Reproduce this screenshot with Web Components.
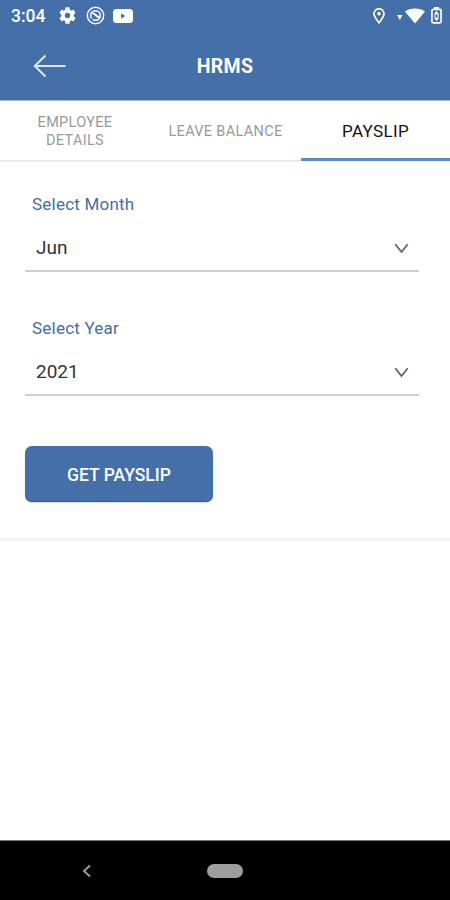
<!DOCTYPE html>
<html lang="en"><head><meta charset="utf-8"><title>HRMS</title>
<style>html,body{margin:0;padding:0;background:#fff}body{font-family:Roboto,"Liberation Sans",sans-serif;width:450px;height:900px;overflow:hidden}</style></head>
<body><hrms-app></hrms-app>
<script>
const define=(name,html)=>customElements.define(name,class extends HTMLElement{
  constructor(){super();this.attachShadow({mode:'open'}).innerHTML=html;}
});
define('status-bar',`<style>
:host{display:flex;height:32px;box-sizing:border-box;padding:0 8.500px 0 11px;align-items:center;color:#fff;font-size:17.500px;font-weight:500;line-height:32px}
svg{display:block;flex:none}.time{width:48px;white-space:nowrap}.gap{flex:1}
</style><span class="time">3:04</span>
<svg style="margin-top:-1px" width="17" height="17" viewBox="2 2 20 20" fill="#fff"><path d="M19.14 12.94c.04-.3.06-.61.06-.94s-.02-.64-.07-.94l2.03-1.58a.49.49 0 0 0 .12-.61l-1.92-3.32a.49.49 0 0 0-.59-.22l-2.39.96a7 7 0 0 0-1.62-.94l-.36-2.54a.48.48 0 0 0-.48-.41h-3.84a.47.47 0 0 0-.47.41l-.36 2.54c-.59.24-1.13.57-1.62.94l-2.39-.96a.48.48 0 0 0-.59.22L2.74 8.87a.47.47 0 0 0 .12.61l2.03 1.58a7 7 0 0 0 0 1.88l-2.03 1.58a.49.49 0 0 0-.12.61l1.92 3.32c.12.22.37.29.59.22l2.39-.96c.5.38 1.03.7 1.62.94l.36 2.54c.05.24.24.41.48.41h3.84c.24 0 .44-.17.47-.41l.36-2.54a7 7 0 0 0 1.62-.94l2.39.96c.22.08.47 0 .59-.22l1.92-3.32a.47.47 0 0 0-.12-.61zM12 15.200a3.200 3.200 0 1 1 0-6.400 3.200 3.200 0 0 1 0 6.400z"/></svg>
<svg style="margin-left:10px;margin-top:-1px" width="19" height="19" viewBox="0 0 19 19" fill="none" stroke="#fff"><circle cx="9.500" cy="9.500" r="8.200" stroke-width="1.500"/><circle cx="9.500" cy="9.500" r="4.800" stroke-width="1.500"/><path d="M5.800 7.200c3-1 4.200 4 7.800 4.300" stroke-width="1.900"/><path d="M4.500 13.800L7.500 12" stroke="#446fa8" stroke-width="1.400"/></svg>
<svg style="margin-left:8px" width="20" height="15" viewBox="0 0 20 15"><rect width="20" height="14" rx="3.500" fill="#fff"/><path d="M8 4.500v5l4.500-2.500z" fill="#446fa8"/></svg>
<span class="gap"></span>
<svg style="margin-top:-1px" width="12" height="16" viewBox="0 0 12 16" fill="none" stroke="#fff" stroke-width="1.700"><path d="M6 14.800C3.500 11.600 1 8.800 1 5.800a5 5 0 0 1 10 0C11 8.800 8.500 11.600 6 14.800z"/><circle cx="6" cy="5.800" r="1.800" fill="#fff" stroke="none"/></svg>
<svg style="margin-left:12px;margin-top:-1px" width="28" height="16" viewBox="0 0 28 16" fill="#fff"><path d="M0 7h5.500L2.800 12z"/><path d="M8 3.400C13-.6 23-.6 28 3.400L18 15.500z"/></svg>
<svg style="margin-left:6px;margin-top:-1px" width="11" height="17" viewBox="0 0 11 17" fill="none" stroke="#fff"><path d="M3 1h5" stroke-width="2"/><rect x=".9" y="2.400" width="9.200" height="13.400" rx="1.200" stroke-width="1.700"/><path d="M5.500 3.800L7.900 7.200H3.100zM5.500 14.200L7.900 10.800H3.100z" fill="#fff" stroke="none"/><path d="M4 7v4M7 7v4" stroke-width="1"/></svg>`);
define('title-bar',`<style>
:host{display:grid;grid-template-columns:100px 1fr 100px;align-items:center;height:68px;color:#fff;font-size:19.500px;font-weight:700;text-align:center;letter-spacing:.25px}
svg{display:block;margin-left:33px}
</style><svg width="34" height="24" viewBox="0 0 34 24" fill="none" stroke="#dce6f4" stroke-width="2"><path d="M12.500 1.500L1.800 12l10.700 10.500M2 12h30.500"/></svg><span><slot></slot></span>`);
define('nav-tab',`<style>
:host{display:flex;align-items:center;justify-content:center;box-sizing:border-box;padding-top:2px;text-align:center;color:#999;font-size:14.500px;letter-spacing:.32px;line-height:18px;border-bottom:2px solid #e9e9e9}
:host([active]){color:#111;font-size:17px;letter-spacing:.35px}
</style><span><slot></slot></span>`);
define('select-field',`<style>
:host{display:block;width:394px;height:95px}
.label{display:block;padding-left:7px;height:43px;line-height:24px;font-size:17px;letter-spacing:.22px;color:#456da6;white-space:nowrap;box-sizing:border-box}
.box{display:flex;justify-content:space-between;padding:0 10.500px 0 11px;height:37px;line-height:26px;border-bottom:2px solid #cfcfcf;box-sizing:border-box;font-size:19px;color:#333}
svg{margin-top:8px;display:block}
</style><span class="label"><slot name="label"></slot></span><div class="box"><span><slot></slot></span><svg width="15" height="11" viewBox="0 0 15 11" fill="none" stroke="#666" stroke-width="1.800"><path d="M1.300 1.200l6.200 7.800 6.200-7.800"/></svg></div>`);
define('action-button',`<style>
:host{display:flex;align-items:center;justify-content:center;width:188px;height:56px;border-radius:7px;background:#446fa8;color:#fff;font-size:17.500px;font-weight:500;box-shadow:inset 0 -1px #2b5d9a,0 1px 2px #0002;padding-top:1px;box-sizing:border-box}
</style><span><slot></slot></span>`);
define('system-nav',`<style>
:host{display:grid;grid-template-columns:1fr 36px 1fr;align-items:center;height:60px;background:#000;border-top:1px solid #777;box-sizing:border-box}
svg{display:block;margin-left:82px}.home{width:36px;height:14px;border-radius:7px;background:#9e9e9e}
</style><svg width="10" height="14" viewBox="0 0 10 14" fill="none" stroke="#999" stroke-width="2"><path d="M8 1.500L2 7l6 5.500"/></svg><i class="home"></i>`);
define('hrms-app',`<style>
:host{display:flex;flex-direction:column;width:450px;height:900px;background:#fff}
header{background:#446fa8;height:101px;border-bottom:1px solid #a5bbd8;box-sizing:border-box;flex:none}
nav{display:grid;grid-template-columns:150px 151px 149px;flex:none;height:61px}
nav-tab{height:61px}
nav-tab[active]{border-bottom:3px solid #5b8ac6;height:60px}
main{display:flex;flex-direction:column;padding:30px 25px 0;height:379px;box-sizing:border-box;border-bottom:3px solid #f3f3f3;flex:none}
select-field{margin-bottom:29px}action-button{margin-top:6px}
system-nav{margin-top:auto}
</style><header><status-bar></status-bar><title-bar>HRMS</title-bar></header>
<nav><nav-tab>EMPLOYEE<br>DETAILS</nav-tab><nav-tab>LEAVE BALANCE</nav-tab><nav-tab active>PAYSLIP</nav-tab></nav>
<main><select-field><span slot="label">Select Month</span>Jun</select-field><select-field><span slot="label">Select Year</span>2021</select-field><action-button>GET PAYSLIP</action-button></main>
<system-nav></system-nav>`);
</script></body></html>
